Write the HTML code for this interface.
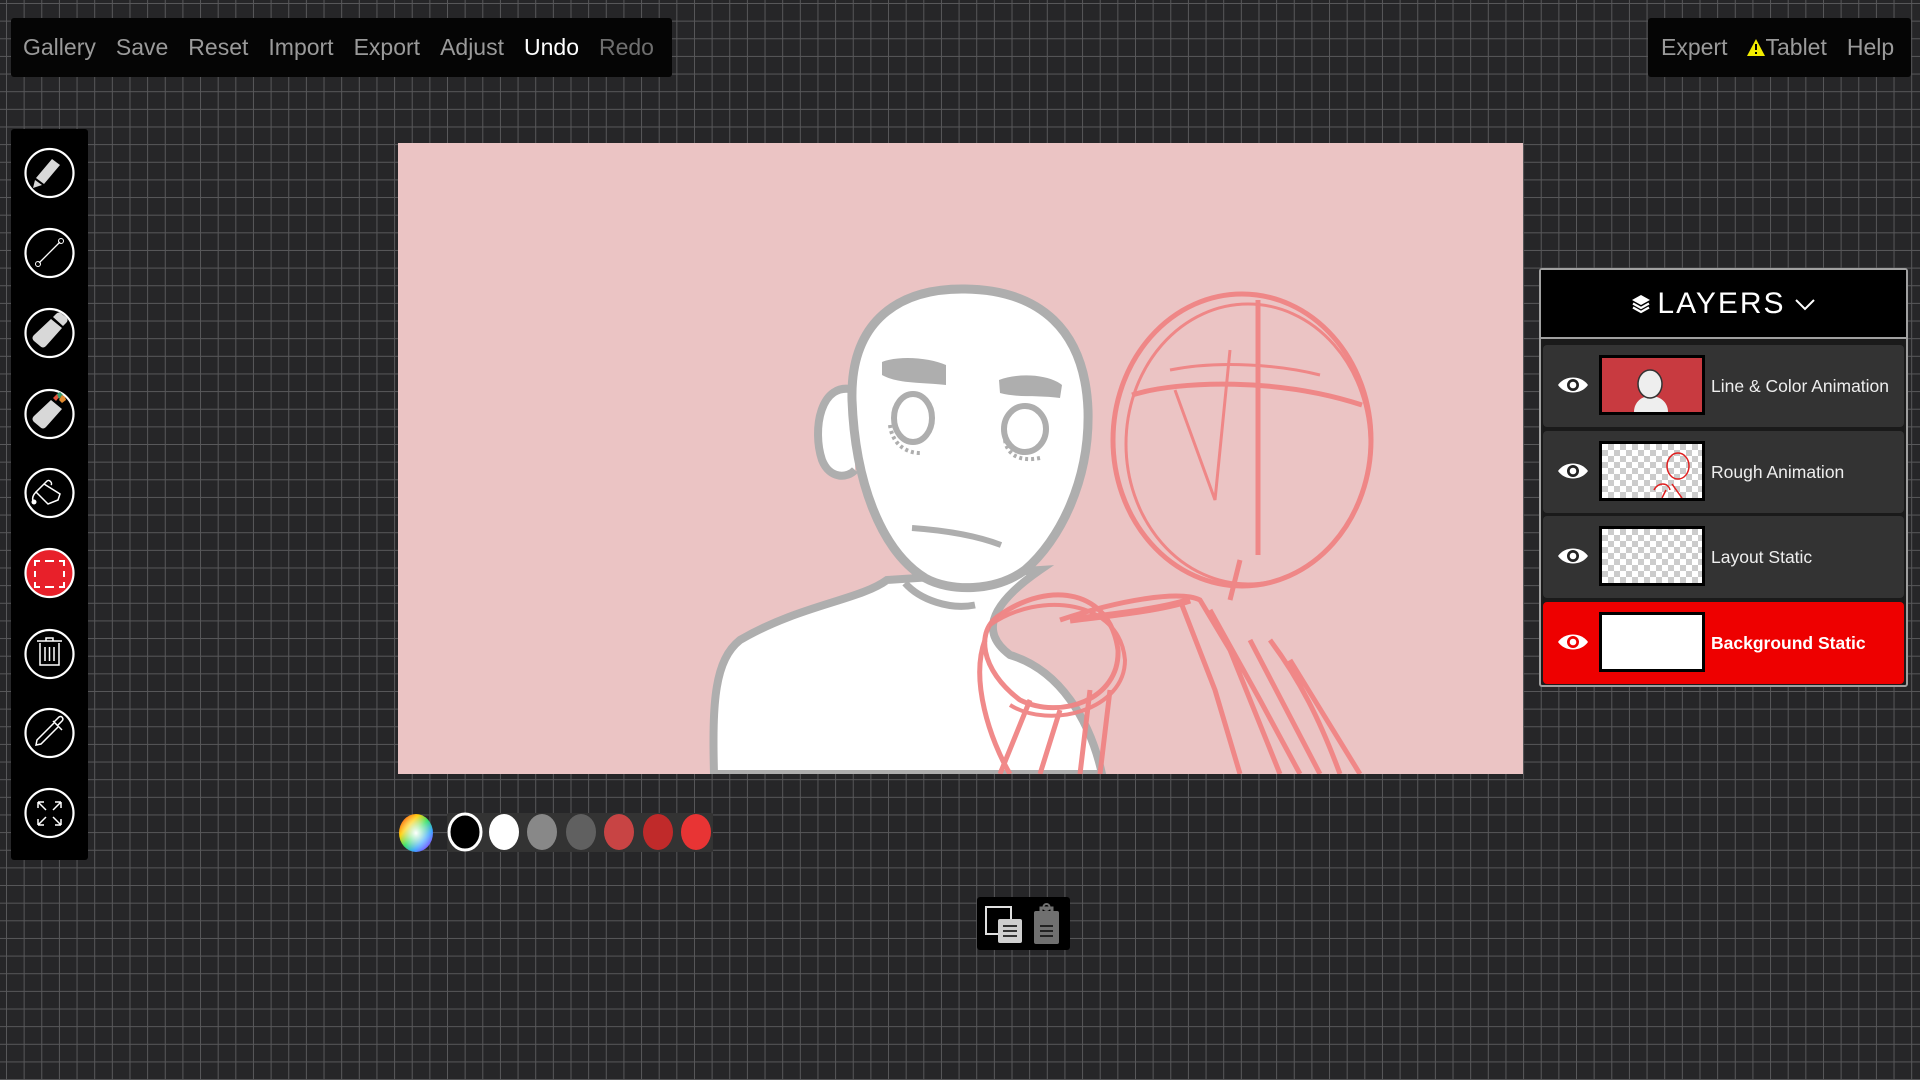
<!DOCTYPE html>
<html><head><meta charset="utf-8"><style>
*{margin:0;padding:0;box-sizing:border-box}
body{width:1920px;height:1080px;overflow:hidden;position:relative;font-family:"Liberation Sans",sans-serif;
background-color:#262628;
background-image:linear-gradient(to right,#58585a 1px,transparent 1px),linear-gradient(to bottom,#58585a 1px,transparent 1px);
background-size:17.65px 17.65px;background-position:6px 3px}
.bar{position:absolute;background:#050505;border-radius:3px;display:flex;align-items:center;font-size:23px;font-weight:300;color:#9a9a9a}
.bar span{margin-right:20px}
#tools{position:absolute;left:11px;top:129px;width:77px;height:731px;background:#000;border-radius:3px}
#tools svg{position:absolute;left:0;top:0}
#canvas{position:absolute;left:398px;top:143px;width:1125px;height:631px;background:#ebc4c4;overflow:hidden}
#layers{position:absolute;left:1539px;top:268px;width:369px;height:419px;border:2px solid #a0a0a0;background:#1a1a1a;border-radius:3px}
#lh{height:69px;background:#000;border-bottom:2px solid #a0a0a0;color:#fff;font-size:30px;letter-spacing:2px;display:flex;align-items:center;justify-content:center}
.row{position:absolute;left:2px;width:361px;height:82px;background:#333;border-radius:4px}
.row .t{position:absolute;left:56px;top:10px;width:106px;height:60px;border:3px solid #000}
.row .n{position:absolute;left:168px;top:0;line-height:82px;font-size:17.5px;color:#eee}
.row svg.eye{position:absolute;left:14px;top:29px}
.chk{background-color:#fff;background-image:linear-gradient(45deg,#ccc 25%,transparent 25%,transparent 75%,#ccc 75%),linear-gradient(45deg,#ccc 25%,transparent 25%,transparent 75%,#ccc 75%);background-size:12px 12px;background-position:0 0,6px 6px}
</style></head><body>

<div class="bar" style="left:11px;top:18px;width:661px;height:59px;padding-left:12px">
<span>Gallery</span><span>Save</span><span>Reset</span><span>Import</span><span>Export</span><span>Adjust</span><span style="color:#fff">Undo</span><span style="color:#6e6e6e">Redo</span></div>

<div class="bar" style="left:1648px;top:18px;width:263px;height:59px;padding-left:13px">
<span>Expert</span><span style="display:flex;align-items:center"><svg width="18" height="17" viewBox="0 0 18 17"><path d="M9 0L18 17H0Z" fill="#f2ec00"/><rect x="8" y="5" width="2" height="6" fill="#000"/><rect x="8" y="13" width="2" height="2" fill="#000"/></svg>Tablet</span><span style="margin-right:0">Help</span></div>

<div id="tools"><svg width="77" height="731" viewBox="0 0 77 731">
<g fill="none" stroke="#fff" stroke-width="2.2">
<circle cx="38.5" cy="44" r="24"/><circle cx="38.5" cy="124" r="24"/><circle cx="38.5" cy="204" r="24"/><circle cx="38.5" cy="285" r="24"/><circle cx="38.5" cy="364" r="24"/>
<circle cx="38.5" cy="525" r="24"/><circle cx="38.5" cy="604" r="24"/><circle cx="38.5" cy="684" r="24"/>
</g>
<circle cx="38.5" cy="444" r="24" fill="#e8202a" stroke="#fff" stroke-width="2.2"/>
<path d="M41 30l8 6-16 19-8-6z" fill="#d8d8d8"/><path d="M24 51l7 5-9 3z" fill="#d8d8d8"/>
<line x1="28" y1="134" x2="49" y2="113" stroke="#fff" stroke-width="1.3"/><circle cx="27" cy="135" r="2.5" fill="none" stroke="#fff"/><circle cx="50" cy="112" r="2.5" fill="none" stroke="#fff"/>
<path d="M40 190l11 9-16 18c-2 2-4 2-6 0l-6-5c-2-2-2-4 0-6z" fill="#d8d8d8"/><path d="M42 188l3-3c2-2 4-2 6 0l4 3c2 2 2 4 0 6l-3 3z" fill="#d8d8d8"/>
<path d="M40 271l11 9-16 18c-2 2-4 2-6 0l-6-5c-2-2-2-4 0-6z" fill="#d8d8d8"/><path d="M42 269l4-4 3 2-4 5z" fill="#e0503a"/><path d="M46 265l3-2 3 3-4 4z" fill="#3a9a6a"/><path d="M51 266l3 2 1 3-4 3-3-3z" fill="#e08a30"/>
<path d="M33 355l-8 8 12 12 10-4 2-6z M33 355l3-3c2-2 6 2 4 4" fill="none" stroke="#fff" stroke-width="1.5"/><path d="M25 363c-3 3-4 6-3 9" fill="none" stroke="#fff" stroke-width="1.5"/><circle cx="23" cy="373" r="2.5" fill="#fff"/>
<g stroke="#fff" stroke-width="2" fill="none"><path d="M24 437v-5h5M34 432h9M48 432h5v5M53 442v6M53 453v5h-5M43 458h-9M29 458h-5v-5M24 448v-6"/></g>
<g fill="none" stroke="#fff" stroke-width="1.5"><path d="M26 512h25M35 512v-3h7v3M29 514v22h19v-22M34 518v14M38.5 518v14M43 518v14"/></g>
<g fill="none" stroke="#fff" stroke-width="1.5"><path d="M43 594l-17 17-1 5 5-1 17-17"/><path d="M42 592l9 9M46 597l5-5c2-2 0-6-3-4l-5 5"/></g>
<g fill="none" stroke="#fff" stroke-width="1.5"><path d="M27 673l8 8M27 673h6M27 673v6M50 673l-8 8M50 673h-6M50 673v6M27 696l8-8M27 696h6M27 696v-6M50 696l-8-8M50 696h-6M50 696v-6"/></g>
</svg></div>

<div id="canvas"><svg width="1125" height="631" viewBox="398 143 1125 631">
<path d="M887 580 C 860 600 800 605 740 640 C 715 660 712 700 714 774 L1102 774 C 1090 720 1060 670 1010 655 C 990 640 975 615 1040 570 Z" fill="#fff" stroke="#aeaeae" stroke-width="8"/>
<path d="M855 390 C 820 380 812 430 822 460 C 830 480 848 478 855 470" fill="#fff" stroke="#aeaeae" stroke-width="8"/>
<path d="M852 400 C 850 320 900 288 965 289 C 1040 290 1085 330 1088 410 C 1090 480 1060 540 1025 570 C 995 592 950 592 925 578 C 880 550 855 480 852 400 Z" fill="#fff" stroke="#aeaeae" stroke-width="9"/>
<g fill="none" stroke="#aeaeae" stroke-width="6"><ellipse cx="913" cy="418" rx="19" ry="24"/><ellipse cx="1025" cy="429" rx="21" ry="23"/></g>
<g fill="none" stroke="#aeaeae" stroke-width="4" stroke-dasharray="3 3"><path d="M890 425c2 18 15 28 30 28M1005 440c2 15 15 22 35 18"/></g>
<path d="M882 362 C 900 355 930 358 946 365 L946 385 C 920 382 898 384 882 375 Z" fill="#aeaeae"/>
<path d="M999 380 C 1020 372 1050 375 1062 385 L1060 398 C 1040 395 1018 398 1000 393 Z" fill="#aeaeae"/>
<path d="M912 528 C 940 530 975 535 1001 545" stroke="#aeaeae" stroke-width="6" fill="none"/>
<path d="M905 583 C 920 600 950 610 975 605" stroke="#aeaeae" stroke-width="7" fill="none"/>
<g fill="none" stroke="#f08484" stroke-width="5" opacity=".95">
<ellipse cx="1242" cy="440" rx="129" ry="146"/>
<ellipse cx="1248" cy="444" rx="122" ry="140" stroke-width="3"/>
<path d="M1258 300 V 555"/><path d="M1132 395 C 1180 380 1280 378 1362 405"/><path d="M1170 370 C 1220 360 1280 365 1320 375" stroke-width="3"/>
<path d="M1175 390 L1215 500 L1230 350" stroke-width="3"/>
<path d="M1000 615 C 1050 580 1110 590 1118 650 C 1120 700 1060 720 1020 700 C 980 670 975 630 1000 615 Z"/>
<path d="M990 625 C 1040 590 1120 600 1125 660 C 1125 710 1050 730 1010 705" stroke-width="4"/>
<path d="M985 640 C 970 680 990 740 1010 774 M1030 700 L1000 774 M1060 710 L1040 774 M1090 690 L1080 774 M1110 690 L1100 774"/>
<path d="M1060 620 C 1120 600 1180 590 1200 600 L1230 650 L1280 774 M1210 610 L1260 700 L1300 774 M1250 640 L1320 774 M1290 660 L1360 774 M1230 600 L1240 560 M1270 640 C 1300 680 1320 720 1340 774 M1180 600 L1215 690 L1240 774"/>
<path d="M1070 620 C 1110 615 1160 610 1190 600" stroke-width="7"/>
</g>
</svg></div>

<svg style="position:absolute;left:398px;top:812px" width="320" height="42" viewBox="398 812 320 42">
<defs><radialGradient id="w" cx="50%" cy="50%" r="50%"><stop offset="0" stop-color="#fff"/><stop offset="1" stop-color="#fff" stop-opacity="0"/></radialGradient>
<linearGradient id="h" x1="0" y1="0" x2="1" y2="1"><stop offset="0" stop-color="#ff3030"/><stop offset=".3" stop-color="#ffd000"/><stop offset=".5" stop-color="#30e060"/><stop offset=".7" stop-color="#30a0ff"/><stop offset="1" stop-color="#c020ff"/></linearGradient></defs>
<ellipse cx="416" cy="833" rx="17" ry="19" fill="url(#h)"/><ellipse cx="416" cy="833" rx="17" ry="19" fill="url(#w)"/>
<rect x="447" y="813" width="266" height="39" rx="2" fill="#333"/>
<ellipse cx="465" cy="832" rx="16" ry="18" fill="#000" stroke="#fff" stroke-width="3"/>
<ellipse cx="504" cy="832" rx="15" ry="18" fill="#fff"/>
<ellipse cx="542" cy="832" rx="15" ry="18" fill="#888"/>
<ellipse cx="581" cy="832" rx="15" ry="18" fill="#606060"/>
<ellipse cx="619" cy="832" rx="15" ry="18" fill="#c84444"/>
<ellipse cx="658" cy="832" rx="15" ry="18" fill="#c02a2a"/>
<ellipse cx="696" cy="832" rx="15" ry="18" fill="#e83434"/>
</svg>

<svg style="position:absolute;left:977px;top:897px" width="93" height="53" viewBox="0 0 93 53">
<rect width="93" height="53" rx="3" fill="#000"/>
<rect x="9" y="10" width="25" height="27" fill="none" stroke="#e0e0e0" stroke-width="2"/>
<rect x="21" y="22" width="24" height="24" rx="2" fill="#cfcfcf"/>
<g stroke="#333" stroke-width="2"><path d="M26 29h14M26 34h14M26 39h14"/></g>
<rect x="57" y="14" width="25" height="33" rx="2" fill="#707070"/>
<path d="M64 15v-4h11v4" fill="none" stroke="#707070" stroke-width="3"/><circle cx="69.5" cy="10" r="3" fill="none" stroke="#707070" stroke-width="2"/>
<g stroke="#222" stroke-width="2"><path d="M63 29h13M63 34h13M63 39h13"/></g>
</svg>

<div id="layers">
<div id="lh"><svg width="20" height="20" viewBox="0 0 20 20" style="margin-right:6px"><path d="M10 1L19 6 10 11 1 6Z" fill="#fff"/><path d="M2 9.5l8 4.5 8-4.5M2 13.5l8 4.5 8-4.5" fill="none" stroke="#fff" stroke-width="2.2"/></svg>LAYERS<svg width="22" height="14" viewBox="0 0 22 14" style="margin-left:8px"><path d="M2 3l9 9 9-9" fill="none" stroke="#fff" stroke-width="2"/></svg></div>

<div class="row" style="top:75px"><svg class="eye" width="32" height="22" viewBox="0 0 32 22"><path d="M1 11C8 1 24 1 31 11 24 21 8 21 1 11Z" fill="#fff"/><circle cx="16" cy="11" r="6" fill="#222"/><circle cx="16" cy="11" r="3.3" fill="#fff"/></svg>
<div class="t" style="background:#c83a40;overflow:hidden"><svg width="100" height="54" viewBox="0 0 100 54"><path d="M32 54c0-10 8-16 16-16 10 0 18 6 18 16z" fill="#eee"/><ellipse cx="48" cy="26" rx="12" ry="14" fill="#eee" stroke="#333" stroke-width="1.5"/></svg></div>
<div class="n">Line &amp; Color Animation</div></div>

<div class="row" style="top:161px"><svg class="eye" width="32" height="22" viewBox="0 0 32 22"><path d="M1 11C8 1 24 1 31 11 24 21 8 21 1 11Z" fill="#fff"/><circle cx="16" cy="11" r="6" fill="#222"/><circle cx="16" cy="11" r="3.3" fill="#fff"/></svg>
<div class="t chk"><svg width="100" height="54" viewBox="0 0 100 54"><g fill="none" stroke="#e02020" stroke-width="1.5"><ellipse cx="76" cy="22" rx="11" ry="13"/><path d="M52 46c4-8 14-8 16 0M70 40l10 14M60 54l4-8"/></g></svg></div>
<div class="n">Rough Animation</div></div>

<div class="row" style="top:246px"><svg class="eye" width="32" height="22" viewBox="0 0 32 22"><path d="M1 11C8 1 24 1 31 11 24 21 8 21 1 11Z" fill="#fff"/><circle cx="16" cy="11" r="6" fill="#222"/><circle cx="16" cy="11" r="3.3" fill="#fff"/></svg>
<div class="t chk"></div>
<div class="n">Layout Static</div></div>

<div class="row" style="top:332px;background:#ee0000"><svg class="eye" width="32" height="22" viewBox="0 0 32 22"><path d="M1 11C8 1 24 1 31 11 24 21 8 21 1 11Z" fill="#fff"/><circle cx="16" cy="11" r="6" fill="#ee0000"/><circle cx="16" cy="11" r="3.3" fill="#fff"/></svg>
<div class="t" style="background:#fff"></div>
<div class="n" style="font-weight:bold;color:#fff">Background Static</div></div>
</div>
</body></html>
